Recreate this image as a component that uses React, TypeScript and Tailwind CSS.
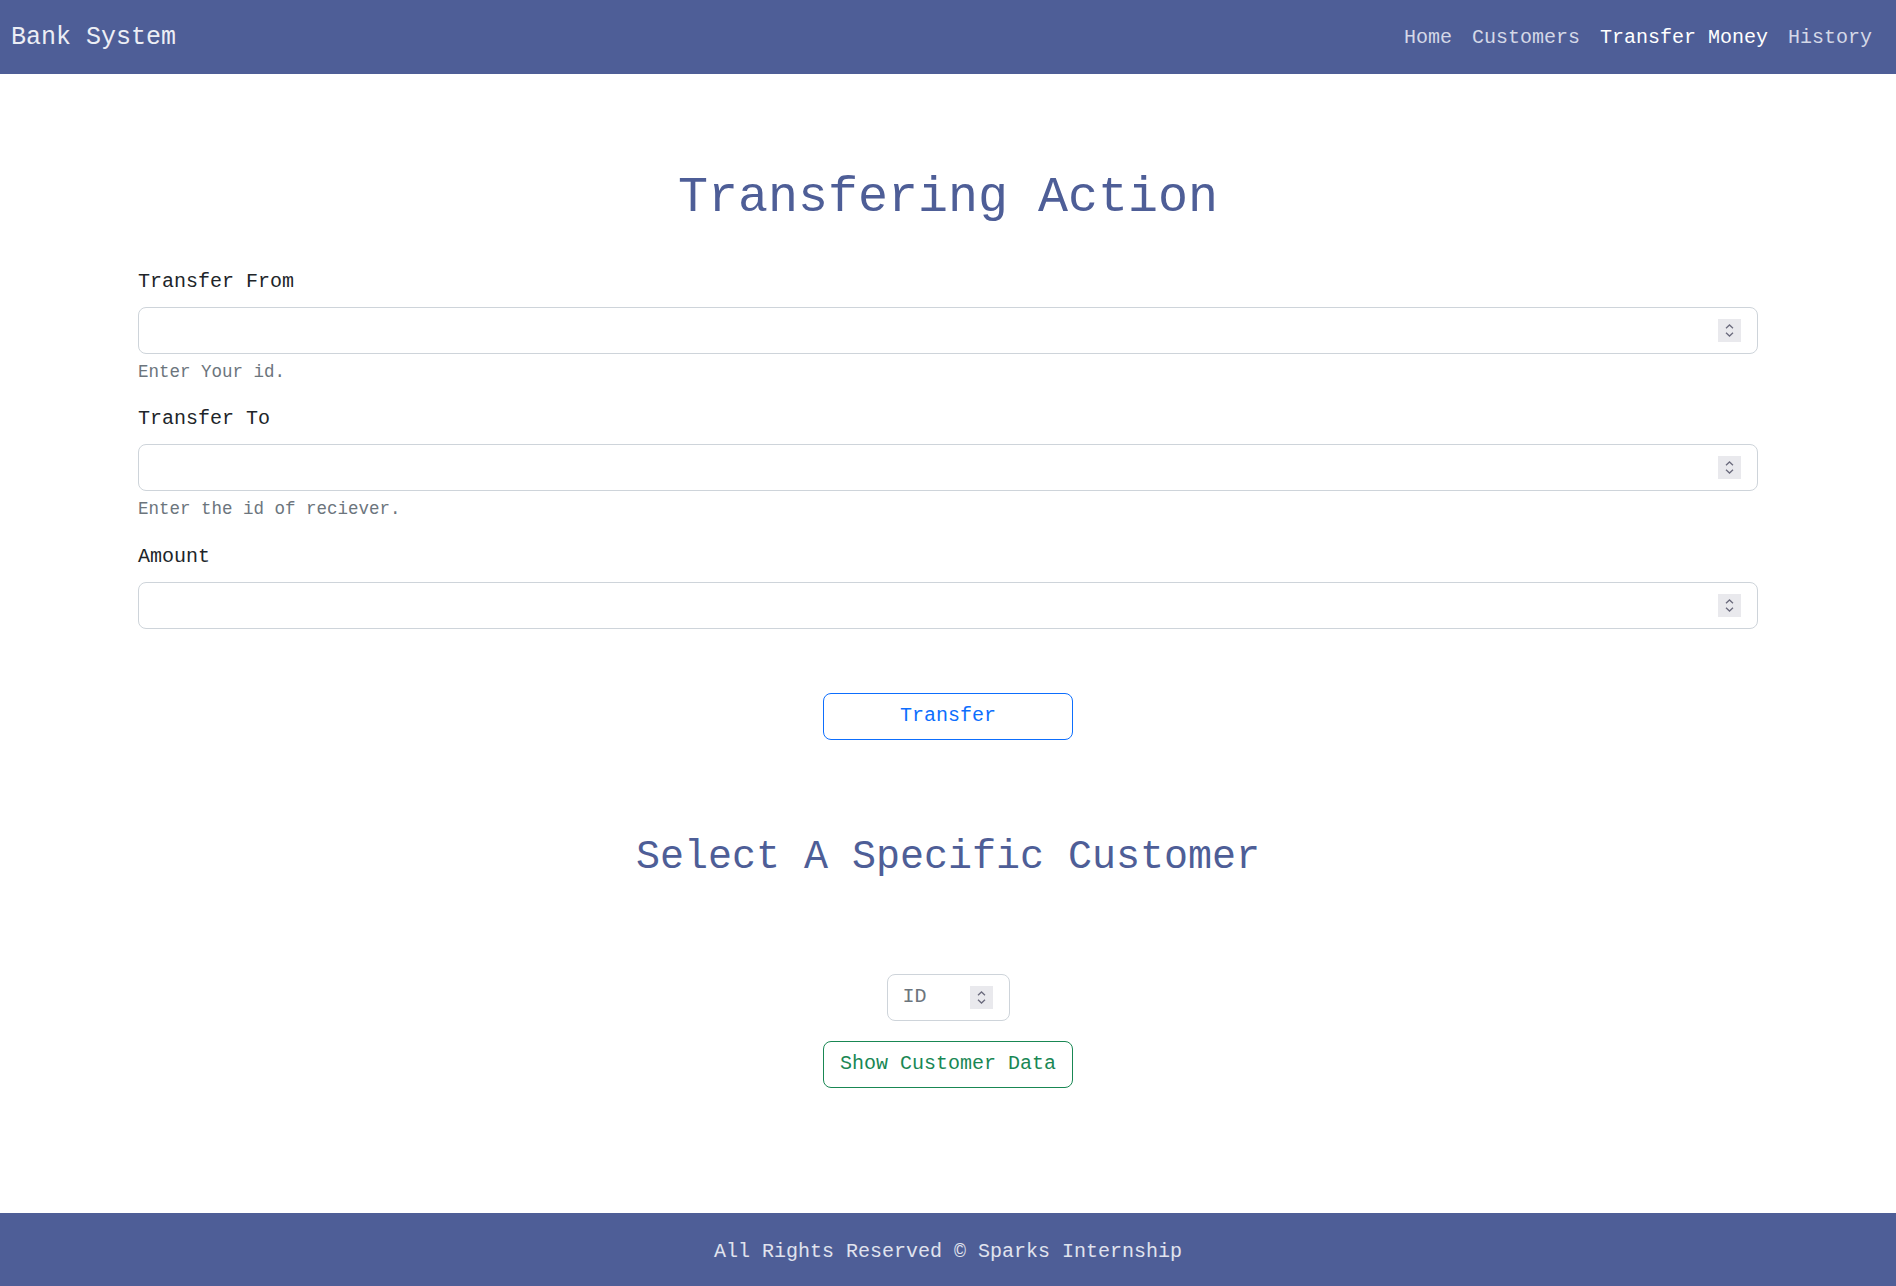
import { useState } from "react";

const NAV_LINKS = [
  { label: "Home", active: false },
  { label: "Customers", active: false },
  { label: "Transfer Money", active: true },
  { label: "History", active: false },
];

function Spinner() {
  return (
    <div className="flex h-[23px] w-[23px] shrink-0 flex-col items-center justify-center gap-[3px] bg-[#e9e9ed]">
      <svg width="9" height="5" viewBox="0 0 9 5" fill="none">
        <path d="M1 4.2 4.5 1 8 4.2" stroke="#6b6b7d" strokeWidth="1.3" />
      </svg>
      <svg width="9" height="5" viewBox="0 0 9 5" fill="none">
        <path d="M1 0.8 4.5 4 8 0.8" stroke="#6b6b7d" strokeWidth="1.3" />
      </svg>
    </div>
  );
}

function NumberInput({ placeholder, className }: { placeholder?: string; className?: string }) {
  const [value, setValue] = useState("");
  return (
    <div
      className={`flex h-[47px] items-center rounded-[8px] border border-[#ced4da] bg-white pr-[16px] pl-[15px] ${className ?? ""}`}
    >
      <input
        type="text"
        inputMode="numeric"
        value={value}
        placeholder={placeholder}
        onChange={(e) => setValue(e.target.value)}
        className="min-w-0 flex-1 bg-transparent text-[20px] text-[#212529] outline-none placeholder:text-[#6c757d]"
      />
      <Spinner />
    </div>
  );
}

function Field({ label, help, mb }: { label: string; help?: string; mb: string }) {
  return (
    <div className={mb}>
      <label className="mb-[10px] block text-[20px] leading-[30px] text-[#212529]">{label}</label>
      <NumberInput />
      {help && <div className="mt-[5px] text-[17.5px] leading-[26.25px] text-[#6c757d]">{help}</div>}
    </div>
  );
}

export default function App() {
  return (
    <div className="flex min-h-screen flex-col bg-white font-['Liberation_Mono','Courier_New',monospace]">
      {/* Navbar */}
      <nav className="flex h-[74px] items-center justify-between bg-[#4e5e97] pt-[2px] pr-[24px] pl-[11px]">
        <span className="text-[25px] text-[#eceef5]">Bank System</span>
        <div className="flex gap-[20px] text-[20px]">
          {NAV_LINKS.map((l) => (
            <a key={l.label} href="#" className={l.active ? "text-white" : "text-[#d4d8e7]"}>
              {l.label}
            </a>
          ))}
        </div>
      </nav>

      <main className="mx-auto w-[1620px]">
        <h1 className="mt-[94px] text-center text-[50px] leading-[60px] text-[#4e5e97]">Transfering Action</h1>

        <div className="mt-[39px]">
          <Field label="Transfer From" help="Enter Your id." mb="mb-[19px]" />
          <Field label="Transfer To" help="Enter the id of reciever." mb="mb-[19px]" />
          <Field label="Amount" mb="mb-0" />
        </div>

        <div className="mt-[64px] flex justify-center">
          <button className="h-[47px] w-[250px] rounded-[8px] border border-[#0d6efd] text-[20px] text-[#0d6efd]">
            Transfer
          </button>
        </div>

        <h2 className="mt-[94px] text-center text-[40px] leading-[48px] text-[#4e5e97]">Select A Specific Customer</h2>

        <div className="mt-[92px] flex flex-col items-center gap-[20px]">
          <NumberInput placeholder="ID" className="w-[123px]" />
          <button className="h-[47px] w-[250px] rounded-[8px] border border-[#198754] text-[20px] text-[#198754]">
            Show Customer Data
          </button>
        </div>
      </main>

      <footer className="mt-[125px] flex h-[75px] items-center justify-center bg-[#4e5e97] pt-[4px] text-[20px] text-[#e0e3ee]">
        All Rights Reserved © Sparks Internship
      </footer>
    </div>
  );
}
